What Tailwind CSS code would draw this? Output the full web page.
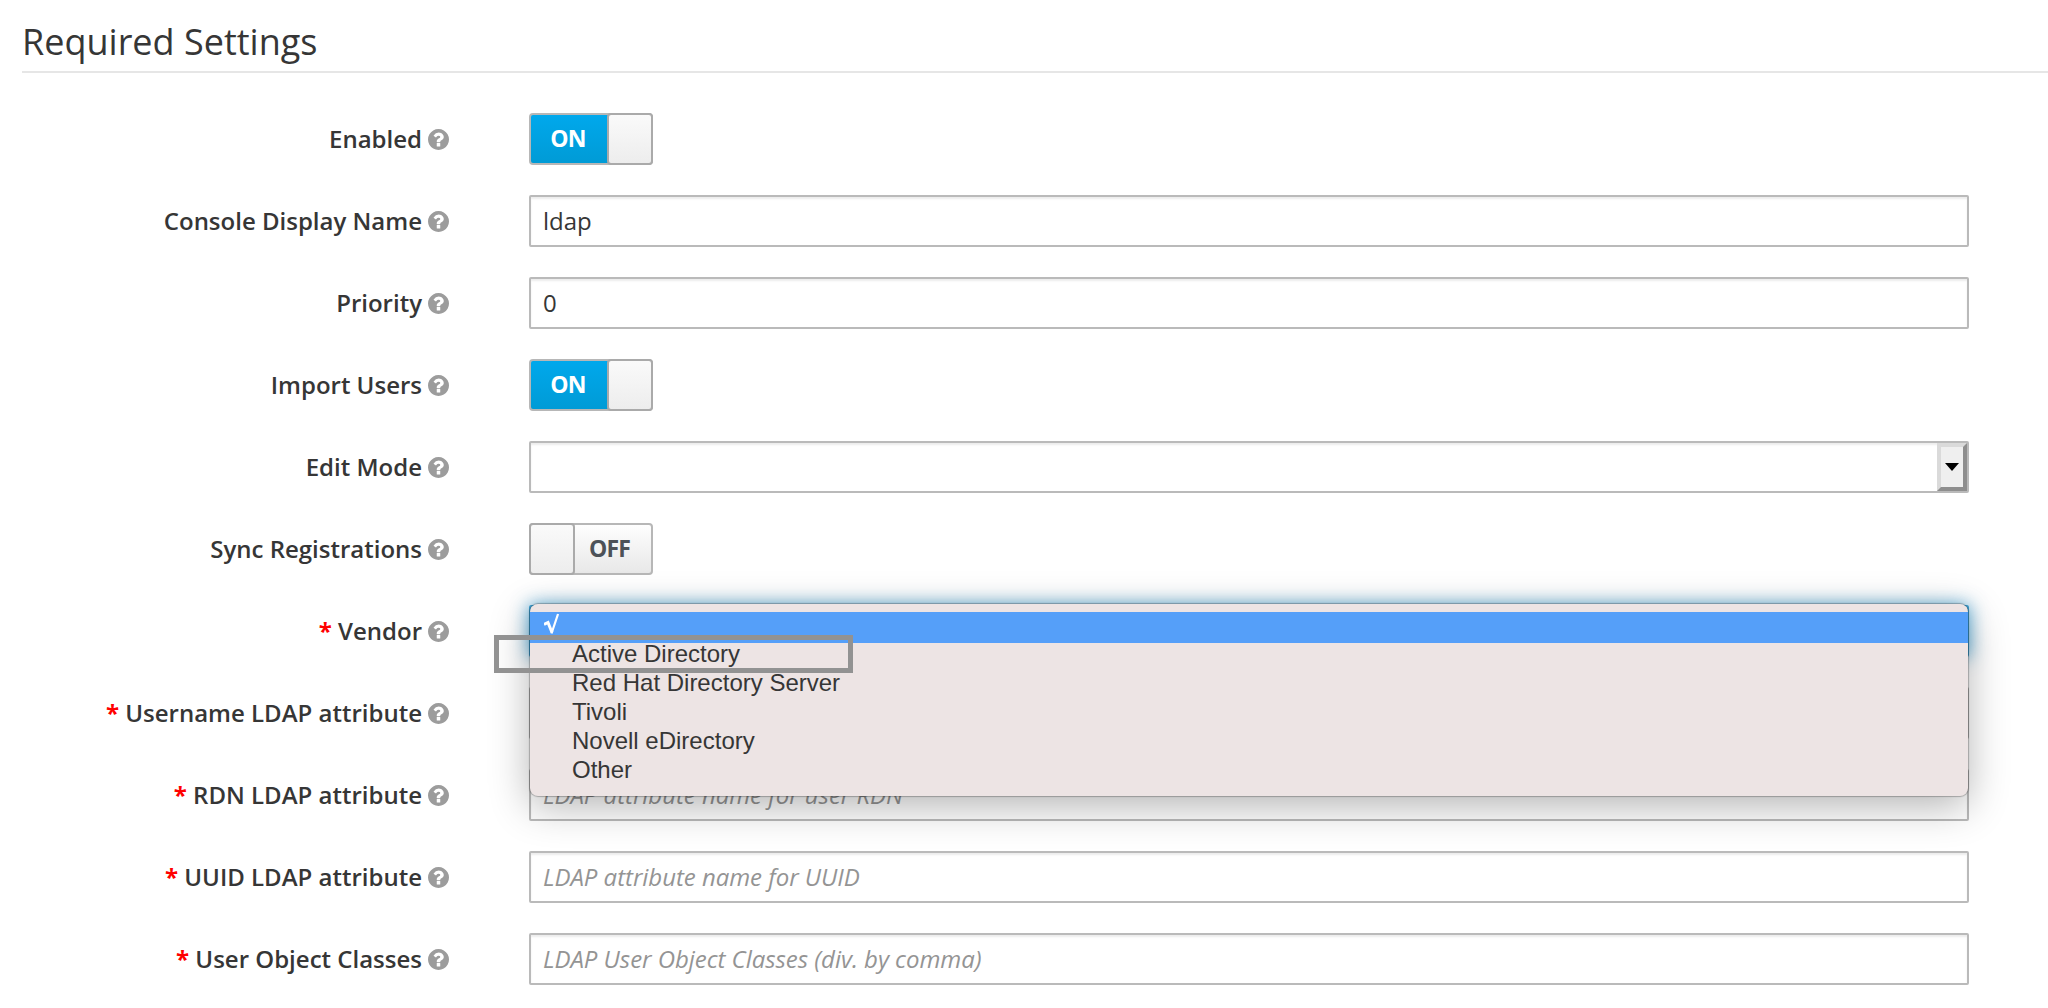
<!DOCTYPE html>
<html lang="en">
<head>
<meta charset="utf-8">
<title>Required Settings</title>
<script src="https://cdn.jsdelivr.net/npm/@tailwindcss/browser@4"></script>
</head>
<body class="bg-white text-[#363636] font-['Open_Sans',sans-serif] text-[24px] leading-[52px] w-[2048px] h-[1008px] overflow-hidden">
<svg class="hidden">
  <symbol id="help" viewBox="0 0 1536 1536">
    <path fill="currentColor" d="M896 1248v-192q0-14-9-23t-23-9H672q-14 0-23 9t-9 23v192q0 14 9 23t23 9h192q14 0 23-9t9-23zm256-672q0-88-55.500-163T958 297t-170-41q-243 0-371 213-15 24 8 42l132 100q7 6 19 6 16 0 25-12 53-68 86-92 34-24 86-24 48 0 85.500 26t37.500 59q0 38-20 61t-68 45q-63 28-115.500 86.500T640 892v36q0 14 9 23t23 9h192q14 0 23-9t9-23q0-19 21.500-49.500T972 829q32-18 49-28.500t46-35 44.500-48 28-60.500 12.500-81zm384 192q0 209-103 385.500T1153.500 1433 768 1536t-385.500-103T103 1153.500 0 768t103-385.500T382.500 103 768 0t385.500 103T1433 382.500 1536 768z"/>
  </symbol>
</svg>
<main>
  <h1 class="ml-[22px] h-[73px] border-b-2 border-[#e6e6e6] text-[36px] leading-[84px]">Required Settings</h1>
  <form class="mt-10 flex flex-col gap-[30px]">
    <div class="flex h-[52px]">
      <label class="flex w-[449px] items-center justify-end gap-[6px] font-semibold whitespace-pre"><span>Enabled</span><svg class="size-[21px] text-[#9c9c9c]"><use href="#help"/></svg></label>
      <div class="ml-20 flex w-[124px] rounded-[4px] border-2 border-[#b7b7b7] bg-linear-to-b from-[#00a8ec] to-[#009bd6]">
        <span class="flex-1 pr-[2px] text-center leading-[47px] font-bold text-white text-[23px] tracking-[-0.8px]">ON</span>
        <span class="-my-[2px] -mr-[2px] w-[46px] rounded-[4px] border-2 border-[#aaa] bg-linear-to-b from-[#fafafa] to-[#ededed]"></span>
      </div>
    </div>
    <div class="flex h-[52px]">
      <label class="flex w-[449px] items-center justify-end gap-[6px] font-semibold whitespace-pre"><span>Console Display Name</span><svg class="size-[21px] text-[#9c9c9c]"><use href="#help"/></svg></label>
      <div class="ml-20 w-[1440px] rounded-[2px] border-2 border-[#bababa] pl-3 leading-[48px] shadow-[inset_0_2px_2px_rgba(3,3,3,0.075)]">ldap</div>
    </div>
    <div class="flex h-[52px]">
      <label class="flex w-[449px] items-center justify-end gap-[6px] font-semibold whitespace-pre"><span>Priority</span><svg class="size-[21px] text-[#9c9c9c]"><use href="#help"/></svg></label>
      <div class="ml-20 w-[1440px] rounded-[2px] border-2 border-[#bababa] pl-3 leading-[48px] shadow-[inset_0_2px_2px_rgba(3,3,3,0.075)]">0</div>
    </div>
    <div class="flex h-[52px]">
      <label class="flex w-[449px] items-center justify-end gap-[6px] font-semibold whitespace-pre"><span>Import Users</span><svg class="size-[21px] text-[#9c9c9c]"><use href="#help"/></svg></label>
      <div class="ml-20 flex w-[124px] rounded-[4px] border-2 border-[#b7b7b7] bg-linear-to-b from-[#00a8ec] to-[#009bd6]">
        <span class="flex-1 pr-[2px] text-center leading-[47px] font-bold text-white text-[23px] tracking-[-0.8px]">ON</span>
        <span class="-my-[2px] -mr-[2px] w-[46px] rounded-[4px] border-2 border-[#aaa] bg-linear-to-b from-[#fafafa] to-[#ededed]"></span>
      </div>
    </div>
    <div class="flex h-[52px]">
      <label class="flex w-[449px] items-center justify-end gap-[6px] font-semibold whitespace-pre"><span>Edit Mode</span><svg class="size-[21px] text-[#9c9c9c]"><use href="#help"/></svg></label>
      <div class="ml-20 flex w-[1440px] justify-end rounded-[2px] border-2 border-[#bababa] shadow-[inset_0_2px_2px_rgba(3,3,3,0.075)]">
        <span class="flex w-[30px] items-center justify-center border-4 border-t-[#dadada] border-l-[#dadada] border-r-[#8e8e8e] border-b-[#8e8e8e] bg-[#efefef]"><svg class="h-2 w-[14px]" viewBox="0 0 14 8"><path d="M0 0h14L7 8z"/></svg></span>
      </div>
    </div>
    <div class="flex h-[52px]">
      <label class="flex w-[449px] items-center justify-end gap-[6px] font-semibold whitespace-pre"><span>Sync Registrations</span><svg class="size-[21px] text-[#9c9c9c]"><use href="#help"/></svg></label>
      <div class="ml-20 flex w-[124px] rounded-[4px] border-2 border-[#b7b7b7] bg-linear-to-b from-[#fefefe] to-[#e8e8e8]">
        <span class="-my-[2px] -ml-[2px] w-[46px] rounded-[4px] border-2 border-[#aaa] bg-linear-to-b from-[#fafafa] to-[#ededed]"></span>
        <span class="flex-1 pr-[7px] text-center leading-[47px] font-bold text-[#4d5258] text-[23px] tracking-[-0.8px]">OFF</span>
      </div>
    </div>
    <div class="relative flex h-[52px]">
      <label class="flex w-[449px] items-center justify-end gap-[6px] font-semibold whitespace-pre"><span><span class="font-bold text-[#f00]">*</span> Vendor</span><svg class="size-[21px] text-[#9c9c9c]"><use href="#help"/></svg></label>
      <div class="ml-20 w-[1440px] rounded-[2px] border-2 border-[#3f9fd0] shadow-[0_0_18px_rgba(0,136,206,0.7)]"></div>
      <!-- open vendor menu -->
      <ul class="absolute top-[-1px] left-[530px] z-10 h-[192px] w-[1438px] overflow-hidden rounded-[8px] bg-[#ede4e4] pt-2 font-['Liberation_Sans',sans-serif] text-[24px] leading-[29px] shadow-[0_0_1px_1px_rgba(0,0,0,0.25),0_10px_40px_rgba(0,0,0,0.3)]">
        <li class="h-[31px] bg-[#559ff9] pl-[14px] text-white"><svg class="h-[23px] w-[15px]" viewBox="0 0 15 23" fill="none" stroke="currentColor"><path stroke-width="3" d="M0 12.500L4 10.500L8 20.500"/><path stroke-width="2.200" d="M7.500 21.500L14 2"/></svg></li>
        <li class="mt-[-4px] pl-[42px]">Active Directory</li>
        <li class="pl-[42px]">Red Hat Directory Server</li>
        <li class="pl-[42px]">Tivoli</li>
        <li class="pl-[42px]">Novell eDirectory</li>
        <li class="pl-[42px]">Other</li>
      </ul>
      <!-- highlight frame round the first vendor -->
      <div class="absolute top-[30px] left-[494px] z-20 h-[38px] w-[359px] border-5 border-[#929292]"></div>
    </div>
    <div class="flex h-[52px]">
      <label class="flex w-[449px] items-center justify-end gap-[6px] font-semibold whitespace-pre"><span><span class="font-bold text-[#f00]">*</span> Username LDAP attribute</span><svg class="size-[21px] text-[#9c9c9c]"><use href="#help"/></svg></label>
      <div class="ml-20 w-[1440px] rounded-[2px] border-2 border-[#bababa]"></div>
    </div>
    <div class="flex h-[52px]">
      <label class="flex w-[449px] items-center justify-end gap-[6px] font-semibold whitespace-pre"><span><span class="font-bold text-[#f00]">*</span> RDN LDAP attribute</span><svg class="size-[21px] text-[#9c9c9c]"><use href="#help"/></svg></label>
      <div class="ml-20 w-[1440px] rounded-[2px] border-2 border-[#bababa] pl-3 leading-[48px] tracking-[-0.04px] text-[#949494] italic shadow-[inset_0_2px_2px_rgba(3,3,3,0.075)]">LDAP attribute name for user RDN</div>
    </div>
    <div class="flex h-[52px]">
      <label class="flex w-[449px] items-center justify-end gap-[6px] font-semibold whitespace-pre"><span><span class="font-bold text-[#f00]">*</span> UUID LDAP attribute</span><svg class="size-[21px] text-[#9c9c9c]"><use href="#help"/></svg></label>
      <div class="ml-20 w-[1440px] rounded-[2px] border-2 border-[#bababa] pl-3 leading-[48px] tracking-[-0.04px] text-[#949494] italic shadow-[inset_0_2px_2px_rgba(3,3,3,0.075)]">LDAP attribute name for UUID</div>
    </div>
    <div class="flex h-[52px]">
      <label class="flex w-[449px] items-center justify-end gap-[6px] font-semibold whitespace-pre"><span><span class="font-bold text-[#f00]">*</span> User Object Classes</span><svg class="size-[21px] text-[#9c9c9c]"><use href="#help"/></svg></label>
      <div class="ml-20 w-[1440px] rounded-[2px] border-2 border-[#bababa] pl-3 leading-[48px] tracking-[-0.04px] text-[#949494] italic shadow-[inset_0_2px_2px_rgba(3,3,3,0.075)]">LDAP User Object Classes (div. by comma)</div>
    </div>
  </form>
</main>
</body>
</html>
